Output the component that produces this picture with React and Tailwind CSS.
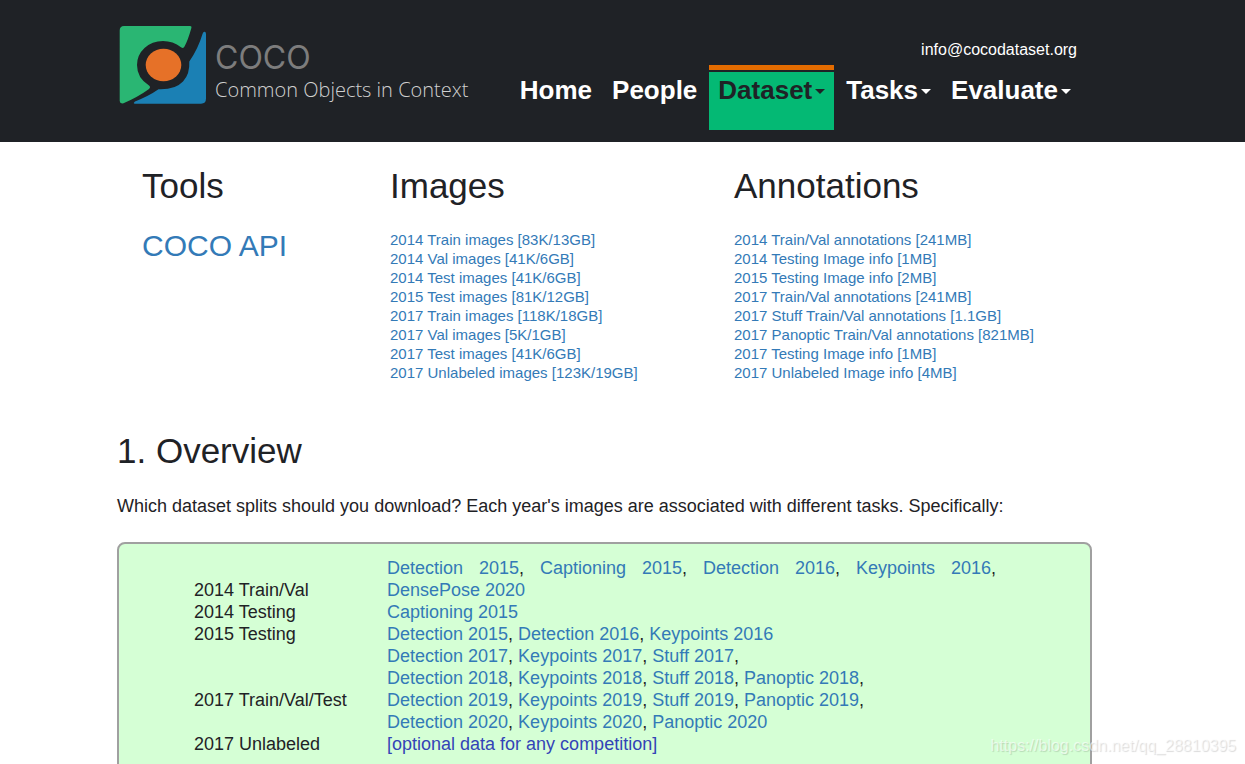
import React, { Fragment } from "react";

const images = [
  "2014 Train images [83K/13GB]",
  "2014 Val images [41K/6GB]",
  "2014 Test images [41K/6GB]",
  "2015 Test images [81K/12GB]",
  "2017 Train images [118K/18GB]",
  "2017 Val images [5K/1GB]",
  "2017 Test images [41K/6GB]",
  "2017 Unlabeled images [123K/19GB]",
];

const annotations = [
  "2014 Train/Val annotations [241MB]",
  "2014 Testing Image info [1MB]",
  "2015 Testing Image info [2MB]",
  "2017 Train/Val annotations [241MB]",
  "2017 Stuff Train/Val annotations [1.1GB]",
  "2017 Panoptic Train/Val annotations [821MB]",
  "2017 Testing Image info [1MB]",
  "2017 Unlabeled Image info [4MB]",
];

const splits = [
  { label: "2014 Train/Val", tasks: ["Detection 2015", "Captioning 2015", "Detection 2016", "Keypoints 2016", "DensePose 2020"] },
  { label: "2014 Testing", tasks: ["Captioning 2015"] },
  { label: "2015 Testing", tasks: ["Detection 2015", "Detection 2016", "Keypoints 2016"] },
  { label: "", tasks: ["Detection 2017", "Keypoints 2017", "Stuff 2017"], more: true },
  { label: "", tasks: ["Detection 2018", "Keypoints 2018", "Stuff 2018", "Panoptic 2018"], more: true },
  { label: "2017 Train/Val/Test", tasks: ["Detection 2019", "Keypoints 2019", "Stuff 2019", "Panoptic 2019"], more: true },
  { label: "", tasks: ["Detection 2020", "Keypoints 2020", "Panoptic 2020"] },
];

function Logo() {
  return (
    <a href="#home" className="flex items-start gap-2">
      <svg width="88" height="80" viewBox="0 0 88 80" aria-hidden="true">
        <path d="M5 1H71Q73 1 72.300 3.200Q69 15 65.500 21.500Q64.500 24 62 22.300Q54 16 44 16Q33 16 25.500 23Q18 30 18 40Q18 53 30 60.500Q32 62 30 64Q19 72 4.500 78.300Q.700 79 .700 76V5.500Q.700 1 5 1Z" fill="#2ab673" />
        <path d="M85.200 6.700Q87 6.500 87 9V73.500Q87 78.700 82 78.700H16Q13.500 78.500 16 76.500Q30 71 39.500 64.300Q56 65 64 56.500Q71 49 70.300 36.500Q79 24 83.500 9Q84 7 85.200 6.700Z" fill="#1b80b4" />
        <ellipse cx="44.500" cy="40" rx="17.800" ry="16.200" fill="#e67128" />
      </svg>
      <span className="flex flex-col pt-[17px]">
        <span className="font-['Inter',sans-serif] text-[32px] leading-8 text-[#7d7d7d]">COCO</span>
        <span className="font-['Open_Sans',sans-serif] text-[20px] font-light leading-8 text-[#d0d0d0] whitespace-nowrap">
          Common Objects in Context
        </span>
      </span>
    </a>
  );
}

function NavItem({ label, menu, active }) {
  return (
    <a
      href={"#" + label.toLowerCase()}
      className={
        active
          ? "mx-0.5 border-t-5 border-[#e46c00] text-[#1f2226]"
          : "border-t-5 border-transparent text-white"
      }
    >
      <span
        className={
          active
            ? "mt-0.5 flex h-[58px] items-start bg-[#04b974] px-[9px] pt-0.5"
            : "mt-0.5 flex h-[58px] items-start px-[10px] pt-0.5"
        }
      >
        <span className="flex items-center gap-[3px] text-[26px] font-bold leading-8">
          {label}
          {menu && (
            <svg width="10" height="5" viewBox="0 0 10 5" className="mt-0.5" aria-hidden="true">
              <path d="M0 0H10L5 5Z" fill="currentColor" />
            </svg>
          )}
        </span>
      </span>
    </a>
  );
}

function Downloads({ title, items }) {
  return (
    <section>
      <h2 className="text-[35px] leading-10">{title}</h2>
      <ul className="mt-6 text-[15px] leading-[19px] text-[#337ab7]">
        {items.map((item) => (
          <li key={item}>
            <a href="#download">{item}</a>
          </li>
        ))}
      </ul>
    </section>
  );
}

export default function App() {
  return (
    <div className="relative h-screen overflow-hidden bg-white font-['Liberation_Sans',Arial,sans-serif] text-[#1f2226]">
      <header className="bg-[#1f2226] pb-3 pl-[119px] pr-[164px]">
        <div className="flex items-start justify-between">
          <div className="pt-[25px]">
            <Logo />
          </div>
          <div className="flex flex-col items-end">
            <a href="mailto:info@cocodataset.org" className="mr-1 pt-[38px] text-base leading-6 text-white">
              info@cocodataset.org
            </a>
            <nav className="mt-[3px] flex">
              <NavItem label="Home" />
              <NavItem label="People" />
              <NavItem label="Dataset" menu active />
              <NavItem label="Tasks" menu />
              <NavItem label="Evaluate" menu />
            </nav>
          </div>
        </div>
      </header>

      <main className="pl-[117px] pr-[153px]">
        <div className="grid grid-cols-[248px_344px_1fr] pl-[25px] pt-6">
          <section>
            <h2 className="text-[35px] leading-10">Tools</h2>
            <a href="#api" className="mt-5 block text-[30px] leading-10 text-[#337ab7]">
              COCO API
            </a>
          </section>
          <Downloads title="Images" items={images} />
          <Downloads title="Annotations" items={annotations} />
        </div>

        <h1 className="mt-[49px] text-[35px] leading-10">1. Overview</h1>
        <p className="mt-6 text-lg leading-[22px]">
          Which dataset splits should you download? Each year's images are associated with different tasks. Specifically:
        </p>

        <div className="mt-[25px] rounded-lg border-2 border-[#a0a0a0] bg-[#d5ffd5] px-[75px] pb-4 pt-[13px]">
          <table className="text-lg leading-[22px]">
            <tbody>
              {splits.map((row) => (
                <tr key={row.tasks.join()}>
                  <th scope="row" className="w-[193px] p-0 text-left align-bottom font-normal">
                    {row.label}
                  </th>
                  <td className="w-[609px] p-0 text-justify">
                    {row.tasks.map((task, i) => (
                      <Fragment key={task}>
                        <a href="#task" className="text-[#337ab7]">
                          {task}
                        </a>
                        {(i < row.tasks.length - 1 || row.more) && ", "}
                      </Fragment>
                    ))}
                  </td>
                </tr>
              ))}
              <tr>
                <th scope="row" className="p-0 text-left font-normal">
                  2017 Unlabeled
                </th>
                <td className="p-0 text-[#3344b7]">[optional data for any competition]</td>
              </tr>
            </tbody>
          </table>
        </div>
      </main>

      <div className="absolute bottom-2 right-[9px] text-base leading-5 text-white/60 [text-shadow:1px_1px_1px_rgba(0,0,0,0.15)]">
        https://blog.csdn.net/qq_28810395
      </div>
    </div>
  );
}
